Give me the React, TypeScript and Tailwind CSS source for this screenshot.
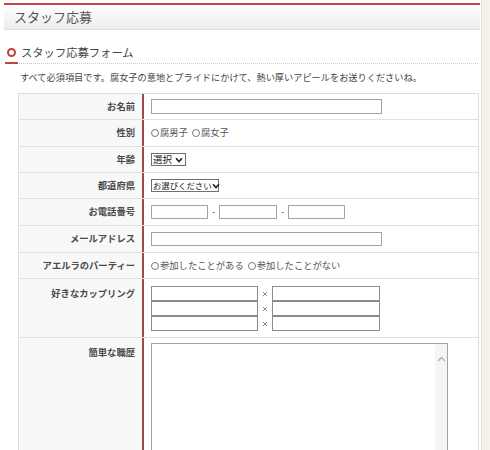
import type { ReactNode } from "react";

const font = { fontFamily: '"Noto Sans CJK JP", "Noto Sans", sans-serif' };

function Radio({ label }: { label: string }) {
  return (
    <span className="mr-[4px] inline-flex items-center">
      <span className="mr-[1px] inline-block h-[8px] w-[8px] rounded-full border border-[#777] bg-white" />
      <span>{label}</span>
    </span>
  );
}

function Select({ label, width, size }: { label: string; width: string; size: string }) {
  return (
    <div className={`flex h-[13px] items-center justify-between whitespace-nowrap border border-[#6f6f6f] bg-white pl-[1px] pr-[2px] leading-none text-[#222] ${width} ${size}`}>
      <span>{label}</span>
      <svg width="8" height="6" viewBox="0 0 8 6" className="shrink-0">
        <path d="M1 1.2 L4 4.5 L7 1.2" fill="none" stroke="#222" strokeWidth="1.6" />
      </svg>
    </div>
  );
}

function Cross() {
  return (
    <span className="flex w-[14px] justify-center">
      <svg width="6" height="6" viewBox="0 0 6 6">
        <path d="M1 1 L5 5 M5 1 L1 5" stroke="#8a8a8a" strokeWidth="1" />
      </svg>
    </span>
  );
}

function Row({
  label,
  children,
  h,
  top = false,
}: {
  label: string;
  children: ReactNode;
  h: string;
  top?: boolean;
}) {
  return (
    <div className={`flex border-b border-[#e2e2e2] ${h}`}>
      <div
        className={`flex w-[125px] shrink-0 justify-end border-r-2 border-[#a14848] bg-[#f8f8f8] pr-[7px] text-[9.3px] font-bold text-[#4a4a4a] ${
          top ? "items-start pt-[8px]" : "items-center"
        }`}
      >
        {label}
      </div>
      <div className={`flex flex-1 pl-[7px] text-[9.3px] text-[#555] ${top ? "items-start" : "items-center"}`}>
        {children}
      </div>
    </div>
  );
}

export default function App() {
  return (
    <div className="flex h-[450px] w-[490px] overflow-hidden bg-[#f6f2ea]" style={font}>
      <div className="w-[482px] shrink-0 border-r border-[#e6e1d8] bg-white pt-[3px]">
        {/* page title bar */}
        <div className="ml-[4px] flex h-[27px] w-[476px] items-center border-t-2 border-b border-t-[#c94545] border-b-[#dedede] bg-gradient-to-b from-white to-[#ececec] pl-[10px] text-[13px] text-[#555]">
          スタッフ応募
        </div>

        {/* section heading */}
        <div className="relative ml-[5px] mt-[11px] flex h-[23px] w-[473px] items-center border-b border-dotted border-[#c8c8c8] pl-[2px] text-[11.3px] text-[#444]">
          <span className="mr-[5px] inline-block h-[9px] w-[9px] rounded-full border-2 border-[#c63a3a]" />
          スタッフ応募フォーム
          <span className="absolute bottom-[-1px] left-0 h-[2px] w-[13px] bg-[#b94545]" />
        </div>

        <div className="h-[29px] pl-[20px] pt-[7px] text-[9.2px] leading-[12px] text-[#444]">
          すべて必須項目です。腐女子の意地とプライドにかけて、熱い厚いアピールをお送りくださいね。
        </div>

        {/* form table */}
        <div className="ml-[18px] w-[461px] border-x border-t border-[#dddddd]">
          <Row label="お名前" h="h-[26px]">
            <div className="h-[15px] w-[231px] border border-[#a3a3a3] bg-white" />
          </Row>
          <Row label="性別" h="h-[27px]">
            <Radio label="腐男子" />
            <Radio label="腐女子" />
          </Row>
          <Row label="年齢" h="h-[26px]">
            <Select label="選択" width="w-[35px]" size="text-[9.5px]" />
          </Row>
          <Row label="都道府県" h="h-[26px]">
            <Select label="お選びください" width="w-[68px]" size="text-[8.4px]" />
          </Row>
          <Row label="お電話番号" h="h-[27px]">
            <div className="h-[14px] w-[57px] border border-[#a3a3a3] bg-white" />
            <span className="w-[11px] text-center">-</span>
            <div className="h-[14px] w-[58px] border border-[#a3a3a3] bg-white" />
            <span className="w-[11px] text-center">-</span>
            <div className="h-[14px] w-[57px] border border-[#a3a3a3] bg-white" />
          </Row>
          <Row label="メールアドレス" h="h-[27px]">
            <div className="h-[14px] w-[231px] border border-[#a3a3a3] bg-white" />
          </Row>
          <Row label="アエルラのパーティー" h="h-[26px]">
            <Radio label="参加したことがある" />
            <Radio label="参加したことがない" />
          </Row>
          <Row label="好きなカップリング" h="h-[59px]" top>
            <div className="flex flex-col pt-[7px]">
              {[0, 1, 2].map((i) => (
                <div key={i} className="flex items-center">
                  <div className="h-[15px] w-[107px] border border-[#8c8c8c] bg-white" />
                  <Cross />
                  <div className="h-[15px] w-[108px] border border-[#8c8c8c] bg-white" />
                </div>
              ))}
            </div>
          </Row>
          <Row label="簡単な職歴" h="h-[140px]" top>
            <div className="mt-[5px] flex h-[130px] w-[297px] border border-[#a3a3a3] bg-white">
              <div className="flex-1" />
              <div className="flex w-[12px] justify-center bg-[#f4f4f4] pt-[12px]">
                <svg width="9" height="6" viewBox="0 0 9 6">
                  <path d="M1 5 L4.5 1.5 L8 5" fill="none" stroke="#b0b0b0" strokeWidth="1.4" />
                </svg>
              </div>
            </div>
          </Row>
        </div>
      </div>
    </div>
  );
}
